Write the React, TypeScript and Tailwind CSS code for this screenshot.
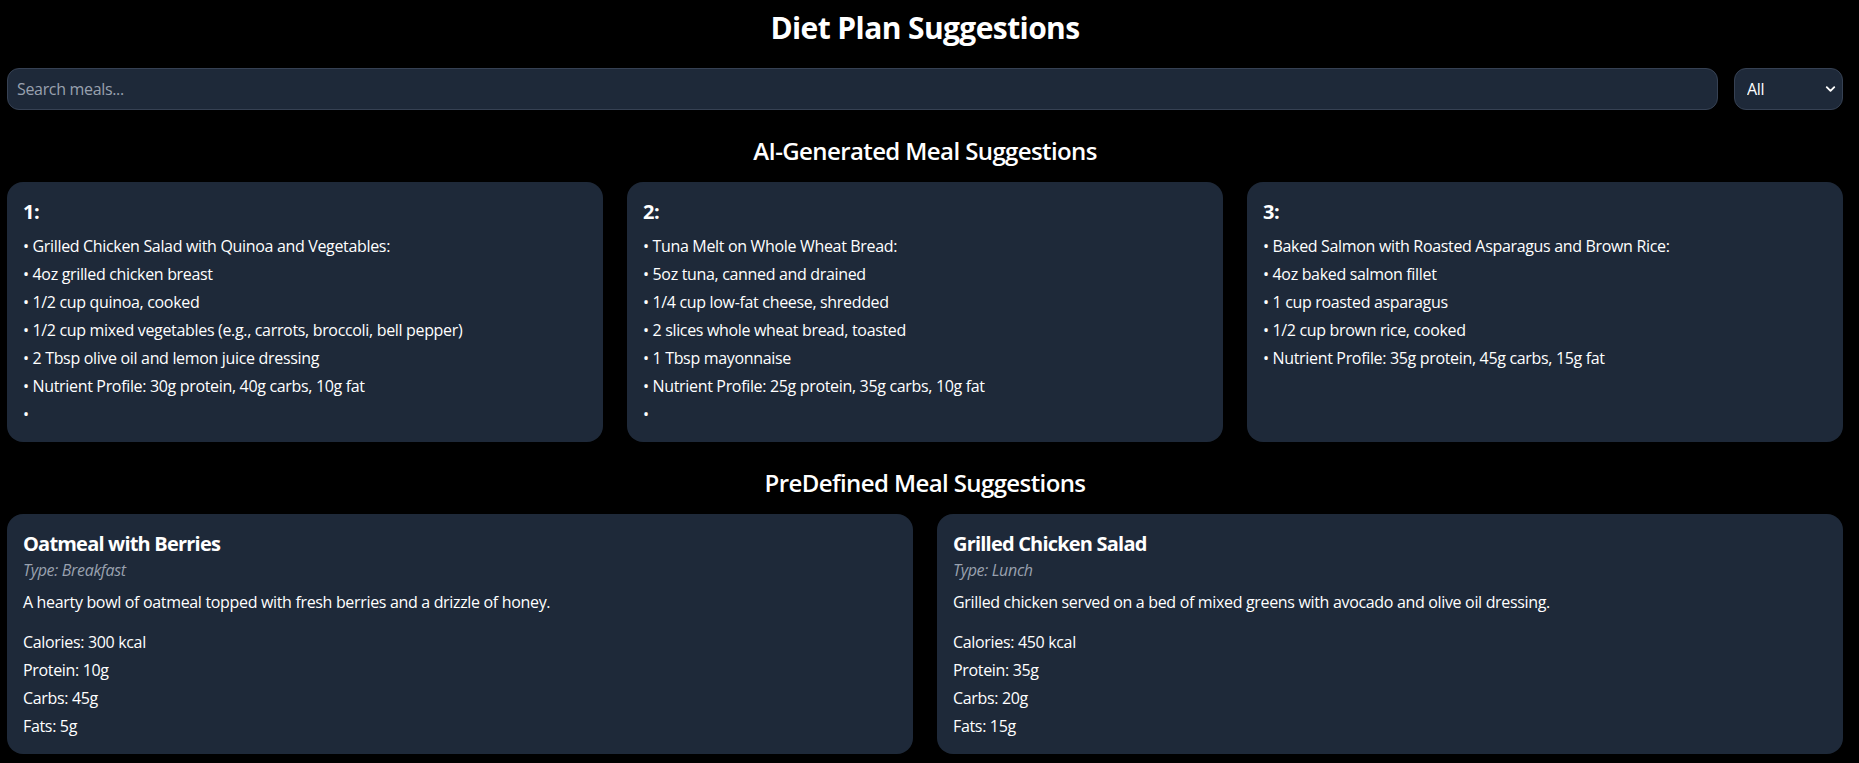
import { ChevronDown } from "lucide-react";

const AI_MEALS: { title: string; lines: string[] }[] = [
  {
    title: "1:",
    lines: [
      "Grilled Chicken Salad with Quinoa and Vegetables:",
      "4oz grilled chicken breast",
      "1/2 cup quinoa, cooked",
      "1/2 cup mixed vegetables (e.g., carrots, broccoli, bell pepper)",
      "2 Tbsp olive oil and lemon juice dressing",
      "Nutrient Profile: 30g protein, 40g carbs, 10g fat",
      "",
    ],
  },
  {
    title: "2:",
    lines: [
      "Tuna Melt on Whole Wheat Bread:",
      "5oz tuna, canned and drained",
      "1/4 cup low-fat cheese, shredded",
      "2 slices whole wheat bread, toasted",
      "1 Tbsp mayonnaise",
      "Nutrient Profile: 25g protein, 35g carbs, 10g fat",
      "",
    ],
  },
  {
    title: "3:",
    lines: [
      "Baked Salmon with Roasted Asparagus and Brown Rice:",
      "4oz baked salmon fillet",
      "1 cup roasted asparagus",
      "1/2 cup brown rice, cooked",
      "Nutrient Profile: 35g protein, 45g carbs, 15g fat",
    ],
  },
];

const MEALS = [
  {
    name: "Oatmeal with Berries",
    type: "Breakfast",
    description: "A hearty bowl of oatmeal topped with fresh berries and a drizzle of honey.",
    calories: 300,
    protein: "10g",
    carbs: "45g",
    fats: "5g",
  },
  {
    name: "Grilled Chicken Salad",
    type: "Lunch",
    description: "Grilled chicken served on a bed of mixed greens with avocado and olive oil dressing.",
    calories: 450,
    protein: "35g",
    carbs: "20g",
    fats: "15g",
  },
];

export default function App() {
  return (
    <div className="min-h-screen bg-black text-white font-['Open_Sans',sans-serif] tracking-[-0.33px] pt-[10px] pl-[7px] pr-4 pb-2">
      <h1 className="text-3xl leading-9 font-bold tracking-[-0.6px] text-center mb-[22px]">Diet Plan Suggestions</h1>

      {/* Search + filter */}
      <div className="flex gap-4 mb-[25px]">
        <input
          type="text"
          placeholder="Search meals..."
          className="flex-1 h-[42px] px-[9px] rounded-xl bg-gray-800 border border-gray-700 text-base tracking-[-0.33px] text-white placeholder:text-gray-400 outline-none"
        />
        <div className="relative w-[109px] shrink-0">
          <select className="w-full h-[42px] appearance-none pl-[12px] pr-8 rounded-xl bg-gray-800 border border-gray-700 text-base text-white outline-none">
            <option>All</option>
            <option>Breakfast</option>
            <option>Lunch</option>
            <option>Dinner</option>
          </select>
          <ChevronDown
            size={15}
            strokeWidth={3}
            className="absolute right-[5px] top-1/2 -translate-y-1/2 pointer-events-none text-white"
          />
        </div>
      </div>

      {/* AI suggestions */}
      <h2 className="text-2xl leading-8 font-semibold tracking-[-0.6px] text-center mb-[15px]">AI-Generated Meal Suggestions</h2>
      <div className="grid grid-cols-3 gap-6 mb-[25px]">
        {AI_MEALS.map((meal) => (
          <div key={meal.title} className="bg-gray-800 rounded-2xl p-4">
            <h3 className="text-xl leading-7 font-bold mb-2">{meal.title}</h3>
            <div className="flex flex-col gap-1">
              {meal.lines.map((line, i) => (
                <p key={i} className="text-base leading-6">
                  • {line}
                </p>
              ))}
            </div>
          </div>
        ))}
      </div>

      {/* Predefined */}
      <h2 className="text-2xl leading-8 font-semibold tracking-[-0.6px] text-center mb-[15px]">PreDefined Meal Suggestions</h2>
      <div className="grid grid-cols-2 gap-6">
        {MEALS.map((meal) => (
          <div key={meal.name} className="bg-gray-800 rounded-2xl p-4">
            <h3 className="text-xl leading-7 font-bold tracking-[-0.8px]">{meal.name}</h3>
            <p className="text-base leading-6 italic text-gray-400 mb-2">Type: {meal.type}</p>
            <p className="text-base leading-6 mb-4">{meal.description}</p>
            <div className="flex flex-col gap-1 text-base leading-6">
              <p>Calories: {meal.calories} kcal</p>
              <p>Protein: {meal.protein}</p>
              <p>Carbs: {meal.carbs}</p>
              <p>Fats: {meal.fats}</p>
            </div>
          </div>
        ))}
      </div>
    </div>
  );
}
